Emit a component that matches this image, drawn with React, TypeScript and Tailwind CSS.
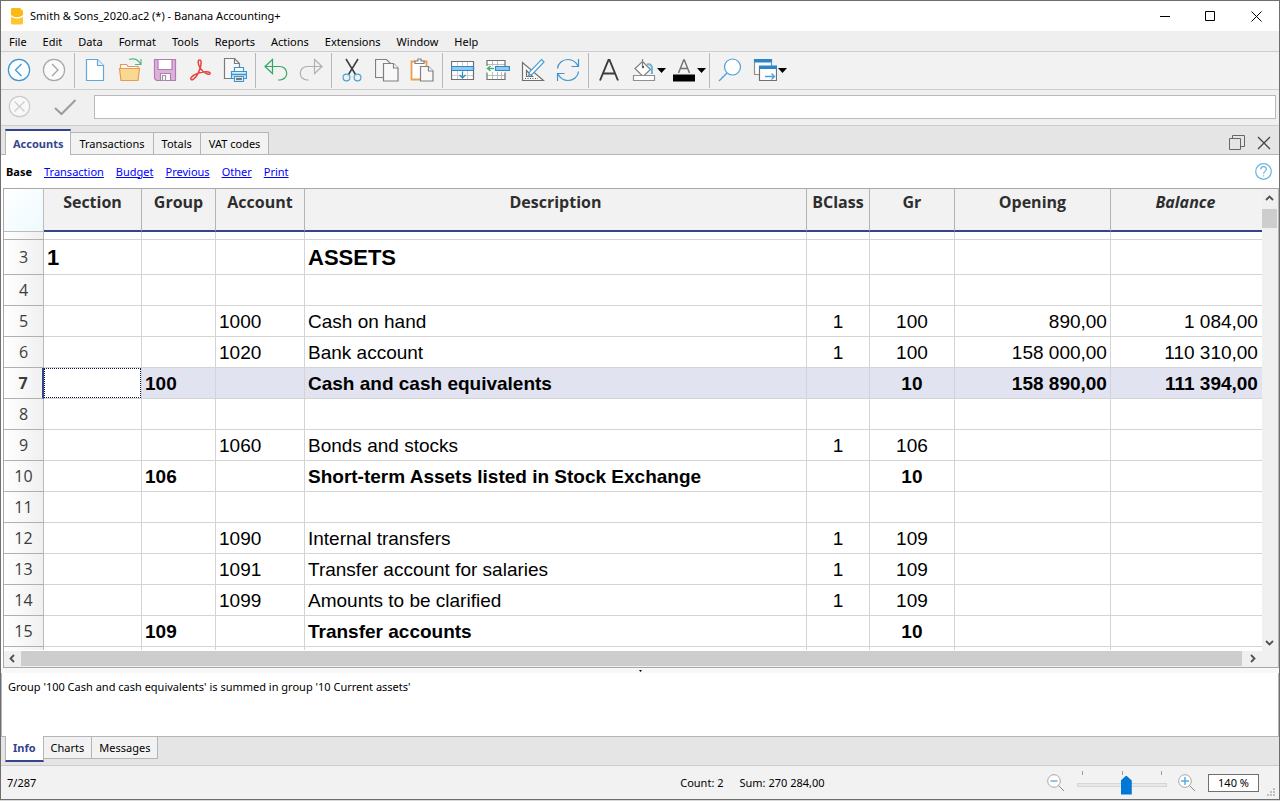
import { useState, type ReactNode } from "react";

const MENUS = ["File", "Edit", "Data", "Format", "Tools", "Reports", "Actions", "Extensions", "Window", "Help"];
const TABS = ["Accounts", "Transactions", "Totals", "VAT codes"];
const VIEWS = ["Transaction", "Budget", "Previous", "Other", "Print"];
const INFO_TABS = ["Info", "Charts", "Messages"];

type Row = {
  n: number;
  section?: string;
  group?: string;
  account?: string;
  description?: string;
  bclass?: string;
  gr?: string;
  opening?: string;
  balance?: string;
  kind?: "title" | "total";
};

const ROWS: Row[] = [
  { n: 3, section: "1", description: "ASSETS", kind: "title" },
  { n: 4 },
  { n: 5, account: "1000", description: "Cash on hand", bclass: "1", gr: "100", opening: "890,00", balance: "1 084,00" },
  { n: 6, account: "1020", description: "Bank account", bclass: "1", gr: "100", opening: "158 000,00", balance: "110 310,00" },
  { n: 7, group: "100", description: "Cash and cash equivalents", gr: "10", opening: "158 890,00", balance: "111 394,00", kind: "total" },
  { n: 8 },
  { n: 9, account: "1060", description: "Bonds and stocks", bclass: "1", gr: "106" },
  { n: 10, group: "106", description: "Short-term Assets listed in Stock Exchange", gr: "10", kind: "total" },
  { n: 11 },
  { n: 12, account: "1090", description: "Internal transfers", bclass: "1", gr: "109" },
  { n: 13, account: "1091", description: "Transfer account for salaries", bclass: "1", gr: "109" },
  { n: 14, account: "1099", description: "Amounts to be clarified", bclass: "1", gr: "109" },
  { n: 15, group: "109", description: "Transfer accounts", gr: "10", kind: "total" },
];

const SELECTED = 7;

function Icon({ children }: { children: ReactNode }) {
  return (
    <svg width="24" height="24" viewBox="0 0 24 24" fill="none" strokeWidth="1.2" aria-hidden="true" className="shrink-0">
      {children}
    </svg>
  );
}

function Caret() {
  return (
    <svg width="9" height="5" viewBox="0 0 9 5" aria-hidden="true" className="shrink-0">
      <path d="M0 0h9L4.5 5z" fill="#000" />
    </svg>
  );
}

function Tool({ label, children }: { label: string; children: ReactNode }) {
  return (
    <button type="button" aria-label={label} className="flex h-9 w-[35px] shrink-0 items-center justify-center">
      <Icon>{children}</Icon>
    </button>
  );
}

function DropTool({ label, children }: { label: string; children: ReactNode }) {
  return (
    <button type="button" aria-label={label} className="flex h-9 w-10 shrink-0 items-center pl-1.5">
      <Icon>{children}</Icon>
      <span className="pl-px">
        <Caret />
      </span>
    </button>
  );
}

function Sep() {
  return (
    <div className="flex h-[35px] w-1.5 shrink-0 justify-center">
      <div className="w-px bg-[#b8b8b8]" />
    </div>
  );
}

function Chevron({ d }: { d: string }) {
  return (
    <svg width="9" height="9" viewBox="0 0 9 9" fill="none" stroke="#505050" strokeWidth="1.8" aria-hidden="true">
      <path d={d} />
    </svg>
  );
}

function Toolbar() {
  return (
    <div role="toolbar" aria-label="Main" className="flex h-[39px] items-center overflow-hidden border-y border-[#cdcdcd] bg-[#f2f2f2] pb-px">
      <Tool label="Back">
        <circle cx="12" cy="12" r="10.6" fill="#fbfdff" stroke="#3c94d0" />
        <path d="M14.5 6L8.5 12l6 6" stroke="#3c94d0" />
      </Tool>
      <Tool label="Forward">
        <circle cx="12" cy="12" r="10.6" fill="#fafafa" stroke="#a8a8a8" />
        <path d="M10 6l6 6-6 6" stroke="#a0a0a0" />
      </Tool>
      <Sep />
      <Tool label="New">
        <path d="M3.5 1.5h11l6 6v15h-17z" fill="#fff" stroke="#62a8da" />
        <path d="M14.5 1.5v6h6" fill="#e2f1fb" stroke="#62a8da" />
      </Tool>
      <Tool label="Open">
        <path d="M2.5 10V6.5h6l1.500 2h10V11" fill="#fff" stroke="#e8935a" />
        <path d="M1.500 10.500h20l-1.500 12H3z" fill="#f8d992" stroke="#ea9a52" />
        <path d="M11 1.500c5-1.500 9 0 11.500 4.500M17 6.500h6V1" stroke="#52b987" />
      </Tool>
      <Tool label="Save">
        <path d="M1.500 1.500h21v21h-19l-2-2z" fill="#dcb2d9" stroke="#b37bb5" />
        <path d="M5 1.500h14v10H5z" fill="#fff" stroke="#b37bb5" />
        <path d="M7.500 22.500v-7h10v7z" fill="#fff" stroke="#b37bb5" />
        <path d="M9.500 17.500h3v5h-3z" fill="#fff" stroke="#999" />
      </Tool>
      <Tool label="Export to PDF">
        <path
          d="M11.500 2c2-.300 2 3.500.700 8-1.500 4.500-4.500 9.800-7 11.400-1.600 1-3.200-.400-2-1.900 2-2.300 7.500-4.600 12.300-5.400 3.500-.600 7-.200 6.600 1.400-.400 1.700-4.400.300-6.900-2C12.600 11.200 10.500 7.500 10.200 4.500c-.1-1.500.400-2.400 1.300-2.500z"
          stroke="#e8403c"
          strokeWidth="1.500"
        />
      </Tool>
      <Tool label="Print">
        <path d="M8 20.500H1.500V.500h10l5 5v4" fill="#f8f8f8" stroke="#7c7c7c" />
        <path d="M11.500.500v5h5" stroke="#7c7c7c" />
        <path d="M11.500 13V9.500h9V13" fill="#fff" stroke="#3c94d0" />
        <path d="M8.500 13.500h15v7h-15z" fill="#d8edfb" stroke="#3c94d0" />
        <path d="M9 16.500h14" stroke="#3c94d0" strokeWidth="1.500" />
        <path d="M11.500 18.500h9v5h-9z" fill="#fff" stroke="#3c94d0" />
        <path d="M13 21h6" stroke="#777" strokeWidth="2.500" />
      </Tool>
      <Sep />
      <Tool label="Undo">
        <path d="M8.500 1.500v14L1 8.500z" stroke="#2faa62" />
        <path d="M1 8.500h15a6.500 6.500 0 0 1 0 13.500h-2" stroke="#2faa62" />
      </Tool>
      <Tool label="Redo">
        <path d="M15.500 1.500v14l7.500-7z" stroke="#b0b0b0" />
        <path d="M23 8.500H8a6.500 6.500 0 0 0 0 13.500h2" stroke="#b0b0b0" />
      </Tool>
      <Sep />
      <Tool label="Cut">
        <path d="M6 1l9.500 15.500M18 1L8.500 16.500" stroke="#3a3a3a" strokeWidth="1.500" />
        <circle cx="6.500" cy="19.500" r="3.400" stroke="#4ba0d8" />
        <circle cx="17.500" cy="19.500" r="3.400" stroke="#4ba0d8" />
      </Tool>
      <Tool label="Copy">
        <path d="M.500 1.500h11l4 4v14H.500z" fill="#f6f6f6" stroke="#808080" />
        <path d="M8.500 5.500h10l4.500 4.500v13H8.500z" fill="#f8f8f8" stroke="#808080" />
        <path d="M18.500 5.500V10H23" fill="#fff" stroke="#808080" />
      </Tool>
      <Tool label="Paste">
        <path d="M1.500 3.500h15v18h-15z" fill="#fff" stroke="#eda04b" strokeWidth="1.800" />
        <path d="M5 5.500V3h3V1h3v2h3v2.500z" fill="#fff" stroke="#808080" />
        <path d="M10.500 8.500h8l4.500 4.500v10H10.500z" fill="#f8f8f8" stroke="#808080" />
        <path d="M18.500 8.500V13H23" fill="#fff" stroke="#808080" />
      </Tool>
      <Sep />
      <Tool label="Insert rows">
        <path d="M.500 3.500h22v18H.500z" fill="#fff" />
        <path d="M6.500 4v17M11.500 4v17M16.500 4v17M1 17.500h22" stroke="#cfcfcf" strokeWidth="1" />
        <path d="M.500 3.500h22v18H.500z" stroke="#707070" />
        <path d="M.500 8.500h22v4H.500z" fill="#90c8f2" stroke="#3088c4" />
        <path d="M11.500 13.500V20M8.500 17l3 3 3-3" stroke="#3088c4" />
      </Tool>
      <Tool label="Add rows">
        <path d="M1 2.500h18v19H1z" fill="#fff" />
        <path d="M6.500 3v5M11.500 3v5M6.500 14v8M11.500 14v8M15.500 14v8M1 17.500h18M1 6.500h18" stroke="#bcbcbc" strokeWidth="1" />
        <path d="M1 8V2.500h18V8M1 14.500v7h18v-7" stroke="#707070" />
        <path d="M9.500 8.500h14v4h-14z" fill="#90c8f2" stroke="#3088c4" />
        <path d="M8 10.500H1.500M4.500 8l-3 2.500 3 2.500" stroke="#45b36b" strokeWidth="1.500" />
      </Tool>
      <Tool label="Check accounting">
        <path d="M1.500 4.500v18h21zM5.500 12.500v6h6z" fill="#f8f8f8" stroke="#707070" />
        <path d="M4 20.500h13" stroke="#555" strokeDasharray="1 1.500" />
        <path d="M20.500 1.500l2.500 2.500-11.500 12-4 1.500 1.500-4z" fill="#fff" stroke="#4a9ed4" />
      </Tool>
      <Tool label="Recalculate">
        <path d="M1.500 10.500C2 5 6.500 1.500 12 1.500c4.500 0 8 2.500 10 6.500M22.500 1v7.500h-7M22.500 13.500C22 19 17.500 22.500 12 22.500c-4.500 0-8-2.500-10-6.500M1.500 23v-7.500h7" stroke="#3c94d0" />
      </Tool>
      <Sep />
      <Tool label="Font">
        <path d="M3 22.500L11.500 2h1L21 22.500M6.500 15.500h11" stroke="#3c3c3c" strokeWidth="1.900" />
      </Tool>
      <DropTool label="Background colour">
        <path d="M10.500 3.500l8 8-7.500 7-8-8z" fill="#fff" stroke="#808080" />
        <path d="M10.500 1v7" stroke="#808080" />
        <circle cx="11" cy="9" r="1.200" fill="#555" />
        <path d="M15 6.500c4-1 5 1.500 5 4.500v5" stroke="#6eb5e4" strokeWidth="2" />
        <path d="M1.500 17.500h21v5h-21z" fill="#fff" stroke="#909090" />
      </DropTool>
      <DropTool label="Text colour">
        <path d="M6.500 15L11.700 2h.6l5.200 13M8.500 10.500h7" stroke="#707070" strokeWidth="1.400" />
        <path d="M1 16.500h22v7H1z" fill="#000" />
      </DropTool>
      <Sep />
      <Tool label="Find">
        <circle cx="14.500" cy="9" r="8" fill="#fff" stroke="#4ba0d8" />
        <path d="M9 15l-8 8" stroke="#4ba0d8" />
      </Tool>
      <DropTool label="Windows">
        <path d="M1.500 1.500h17v15h-17z" fill="#fff" stroke="#909090" />
        <path d="M1 1h18v3.500H1z" fill="#2787c8" />
        <path d="M6.500 8.500h17v14h-17z" fill="#fff" stroke="#707070" />
        <path d="M6 7.500h18V11H6z" fill="#2787c8" />
        <path d="M12 18.500h9.500M18.500 15.500l3 3-3 3" stroke="#4ba0d8" strokeWidth="1.400" />
      </DropTool>
    </div>
  );
}

function TitleBar() {
  return (
    <header className="flex h-[30px] shrink-0 items-center bg-white pl-[9px]">
      <svg width="14" height="17" viewBox="0 0 14 17" aria-hidden="true">
        <path d="M1.500 0H10l3 3v4c-3.500 3-8.500 3-12 0V.500z" fill="#fbb917" />
        <path d="M1 8.500c4 2.800 8.500 2.800 12 0V15.500L12 16.500H2L1 15.500z" fill="#fcc630" />
      </svg>
      <h1 className="grow truncate pl-1.5">Smith &amp; Sons_2020.ac2 (*) - Banana Accounting+</h1>
      <div className="flex">
        <button type="button" aria-label="Minimize" className="flex h-7 w-[46px] items-center justify-center">
          <svg width="11" height="11" viewBox="0 0 11 11" stroke="#000" fill="none"><path d="M0 5.500h10" /></svg>
        </button>
        <button type="button" aria-label="Maximize" className="flex h-7 w-[45px] items-center justify-center">
          <svg width="11" height="11" viewBox="0 0 11 11" stroke="#000" fill="none"><path d="M.500.500h9v9h-9z" /></svg>
        </button>
        <button type="button" aria-label="Close" className="flex h-7 w-[46px] items-center justify-center">
          <svg width="11" height="11" viewBox="0 0 11 11" stroke="#000" fill="none"><path d="M.500.500l10 10M10.500.500l-10 10" /></svg>
        </button>
      </div>
    </header>
  );
}

function AccountsTable() {
  const head = "border-r border-b-2 border-r-[#b4b4b4] border-b-[#34448f] bg-[#f2f2f2] p-0 pt-px align-top font-bold";
  const cell = "overflow-hidden border-r border-b border-[#d4d4d4] px-[3px] pt-0.5 pb-0 whitespace-nowrap";
  const last = "overflow-hidden border-b border-[#d4d4d4] pt-0.5 pr-1 pb-0 pl-[3px] text-right whitespace-nowrap";
  const numCell = "border-b border-b-[#b0b0b0] bg-linear-to-r from-white to-[#f0f0f0] p-0 text-center";
  const numEdge = "border-r border-r-[#bcbcbc]";
  return (
    <table className="w-full table-fixed border-separate border-spacing-0">
      <colgroup>
        <col className="w-10" />
        <col className="w-[98px]" />
        <col className="w-[74px]" />
        <col className="w-[89px]" />
        <col />
        <col className="w-[63px]" />
        <col className="w-[85px]" />
        <col className="w-[156px]" />
        <col className="w-[151px]" />
      </colgroup>
      <thead>
        <tr className="h-[43px] text-base leading-6 text-[#2e2e2e]">
          <td className="border-r border-b border-[#bcbcbc] bg-linear-to-br from-white to-[#eefaff] p-0" />
          <th className={head}>Section</th>
          <th className={head}>Group</th>
          <th className={head}>Account</th>
          <th className={head}>Description</th>
          <th className={head}>BClass</th>
          <th className={head}>Gr</th>
          <th className={head}>Opening</th>
          <th className="border-b-2 border-b-[#34448f] bg-[#f2f2f2] p-0 pt-px pr-0.5 align-top font-bold italic">Balance</th>
        </tr>
      </thead>
      <tbody className="font-['Liberation_Sans',Arial,sans-serif] text-[19px] leading-6">
        <tr className="h-2">
          <td className={`${numCell} ${numEdge}`} />
          {[0, 1, 2, 3, 4, 5, 6].map((i) => (
            <td key={i} className={cell} />
          ))}
          <td className={last} />
        </tr>
        {ROWS.map((r) => {
          const selected = r.n === SELECTED;
          return (
            <tr
              key={r.n}
              aria-selected={selected}
              className={`${r.kind === "title" ? "h-[35px] text-[22px]" : "h-[31px]"} ${r.kind ? "font-bold" : ""} ${selected ? "bg-[#e2e3f1]" : ""}`}
            >
              <th
                scope="row"
                className={`${numCell} font-['Open_Sans','Noto_Sans',sans-serif] text-base text-[#3c3c3c] ${selected ? "border-r-2 border-r-[#34448f] font-bold" : `${numEdge} font-normal`}`}
              >
                {r.n}
              </th>
              {selected ? (
                <td className="border-r border-b border-[#d4d4d4] bg-white p-0">
                  <div className="h-[30px] border border-dotted border-[#101840]">{r.section}</div>
                </td>
              ) : (
                <td className={cell}>{r.section}</td>
              )}
              <td className={cell}>{r.group}</td>
              <td className={cell}>{r.account}</td>
              <td className={cell}>{r.description}</td>
              <td className={`${cell} text-center`}>{r.bclass}</td>
              <td className={`${cell} text-center`}>{r.gr}</td>
              <td className={`${cell} text-right`}>{r.opening}</td>
              <td className={last}>{r.balance}</td>
            </tr>
          );
        })}
        <tr className="h-[31px]">
          <td className={`${numCell} ${numEdge}`} />
          {[0, 1, 2, 3, 4, 5, 6].map((i) => (
            <td key={i} className={cell} />
          ))}
          <td className={last} />
        </tr>
      </tbody>
    </table>
  );
}

export default function App() {
  const [entry, setEntry] = useState("");
  const [zoom, setZoom] = useState(140);
  return (
    <div className="flex h-screen flex-col bg-[#d9d9d9] pb-px text-[11px] leading-4 text-black">
      <div className="flex min-h-0 grow flex-col border border-[#6e6e6e] bg-[#f0f0f0] font-['Noto_Sans','Open_Sans',sans-serif]">
        <TitleBar />
        <nav aria-label="Menu" className="flex h-5 shrink-0 items-center bg-[#efefef]">
          {MENUS.map((m) => (
            <button key={m} type="button" className="px-2 pt-0.5">
              {m}
            </button>
          ))}
        </nav>
        <div className="shrink-0">
          <Toolbar />
        </div>

        <div className="flex h-9 shrink-0 items-center gap-[18px] border-b border-[#cdcdcd] pr-[3px] pb-0.5 pl-1.5">
          <button type="button" aria-label="Cancel entry">
            <svg width="24" height="24" viewBox="0 0 24 24" fill="none" stroke="#cccccc" strokeWidth="1.2">
              <circle cx="12.500" cy="11.500" r="10.200" fill="#f8f8f8" />
              <path d="M7.500 6.500l10 10M17.500 6.500l-10 10" />
            </svg>
          </button>
          <div className="flex grow items-center gap-[17px]">
            <button type="button" aria-label="Confirm entry">
              <svg width="28" height="24" viewBox="0 0 28 24" fill="none" stroke="#9c9c9c" strokeWidth="2">
                <path d="M6 13l6.500 6L26.500 5" />
              </svg>
            </button>
            <input
              type="text"
              aria-label="Cell content"
              value={entry}
              onChange={(e) => setEntry(e.target.value)}
              className="h-6 grow border border-[#bababa] bg-white px-1 text-xs outline-none"
            />
          </div>
        </div>

        <div className="flex h-[29px] shrink-0 items-end border-b border-[#b5b5b5] bg-[#e5e5e5] pl-1">
          <div role="tablist" aria-label="Tables" className="-mb-px flex items-end">
            {TABS.map((t, i) => (
              <button
                key={t}
                type="button"
                role="tab"
                aria-selected={i === 0}
                className={
                  i === 0
                    ? "h-[26px] border-t-2 border-r border-l border-t-[#34448f] border-r-[#b5b5b5] border-l-[#b5b5b5] bg-white px-[7px] pt-px font-bold text-[#34448f]"
                    : "h-[23px] border border-l-0 border-[#b5b5b5] bg-[#f2f2f2] px-2"
                }
              >
                {t}
              </button>
            ))}
          </div>
          <div className="flex grow items-center justify-end gap-3 pr-2 pb-[3px]">
            <button type="button" aria-label="Restore view">
              <svg width="16" height="16" viewBox="0 0 16 16" fill="#e5e5e5" stroke="#666">
                <path d="M3.500.500h12v11h-12z" />
                <path d="M.500 3.500h11v11H.500z" />
              </svg>
            </button>
            <button type="button" aria-label="Close view">
              <svg width="14" height="14" viewBox="0 0 14 14" fill="none" stroke="#444" strokeWidth="1.300">
                <path d="M1 1l12 12M13 1L1 13" />
              </svg>
            </button>
          </div>
        </div>

        <nav aria-label="Views" className="flex h-[33px] shrink-0 items-center gap-3 bg-white pr-[7px] pl-[5px]">
          <span className="font-bold">Base</span>
          {VIEWS.map((v) => (
            <a key={v} href="#" className="text-[#0000ff] underline">
              {v}
            </a>
          ))}
          <a href="#" aria-label="Help on views" className="ml-auto">
            <svg width="17" height="17" viewBox="0 0 17 17" fill="none" stroke="#6db4e2" strokeWidth="1.200">
              <circle cx="8.500" cy="8.500" r="7.800" />
              <path d="M5.800 6.500c0-1.800 1.200-2.800 2.800-2.800s2.700 1 2.700 2.500c0 2.200-2.700 2.200-2.700 4.500M8.600 12.200v1.400" />
            </svg>
          </a>
        </nav>

        <div className="flex min-h-0 grow flex-col bg-white pl-0.5 font-['Open_Sans','Noto_Sans',sans-serif]">
          <div className="flex min-h-0 grow flex-col border-t border-b border-l border-[#a8a8a8] bg-[#f0f0f0]">
            <div className="flex min-h-0 grow">
              <main className="min-w-0 grow overflow-hidden border-b border-white bg-white">
                <AccountsTable />
              </main>
              <div className="flex w-4 shrink-0 flex-col items-center justify-between bg-[#f0f0f0] pt-[5px] pr-px pb-1">
                <div className="flex w-full flex-col items-center gap-1.5">
                  <Chevron d="M1 6l3.500-3.500L8 6" />
                  <div className="h-[19px] w-full bg-[#cdcdcd]" />
                </div>
                <Chevron d="M1 3l3.500 3.500L8 3" />
              </div>
              <div className="w-px shrink-0 bg-[#b5b5b5]" />
            </div>
            <div className="flex h-4 shrink-0 items-start">
              <div className="flex h-[15px] w-[17px] items-center justify-center">
                <Chevron d="M6 1L2.500 4.500 6 8" />
              </div>
              <div className="h-[15px] grow bg-[#cdcdcd]" />
              <div className="flex h-[15px] w-9 items-center pl-1.5">
                <Chevron d="M3 1l3.500 3.500L3 8" />
              </div>
              <div className="h-4 w-px shrink-0 bg-[#b5b5b5]" />
            </div>
          </div>
        </div>

        <div className="flex h-[5px] shrink-0 items-start justify-center bg-[#f8f8f8]">
          <svg width="3" height="5" viewBox="0 0 3 5"><path d="M0 2h3L1.500 4z" fill="#000" /></svg>
        </div>
        <section aria-label="Info" className="h-16 shrink-0 border-x border-b border-[#b5b5b5] bg-white px-1.5 pt-1.5">
          <p>Group '100 Cash and cash equivalents' is summed in group '10 Current assets'</p>
        </section>
        <div role="tablist" aria-label="Messages" className="flex h-[29px] shrink-0 items-start border-b border-[#cdcdcd] bg-[#e5e5e5] pl-1">
          {INFO_TABS.map((t, i) => (
            <button
              key={t}
              type="button"
              role="tab"
              aria-selected={i === 0}
              className={
                i === 0
                  ? "-mt-px h-[26px] border-r border-b-2 border-l border-r-[#b5b5b5] border-b-[#34448f] border-l-[#b5b5b5] bg-white px-[7px] font-bold text-[#34448f]"
                  : "h-[22px] border-r border-b border-[#b5b5b5] bg-[#f2f2f2] px-[7px]"
              }
            >
              {t}
            </button>
          ))}
        </div>

        <footer className="flex h-[33px] shrink-0 items-center bg-[#f2f2f2] pl-1.5">
          <span className="flex-1">7/287</span>
          <span>Count: 2</span>
          <span className="pl-4">Sum: 270 284,00</span>
          <div className="flex flex-[0.675] items-center justify-end">
            <button type="button" aria-label="Zoom out">
              <svg width="18" height="18" viewBox="0 0 18 18" fill="none">
                <circle cx="7" cy="7" r="6.300" fill="#fff" stroke="#a8a8a8" />
                <path d="M3.500 7h7" stroke="#7fc0ea" strokeWidth="1.800" />
                <path d="M11.500 11.500l5.500 5.500" stroke="#888" />
              </svg>
            </button>
            <div className="ml-3 flex h-7 w-[90px] flex-col pt-0.5">
              <div className="flex h-1 shrink-0 justify-between px-[5px]" aria-hidden="true">
                <span className="w-px bg-[#a0a090]" />
                <span className="w-px bg-[#a0a090]" />
                <span className="w-px bg-[#a0a090]" />
              </div>
              <input
                type="range"
                aria-label="Zoom"
                min={20}
                max={236}
                value={zoom}
                onChange={(e) => setZoom(Number(e.target.value))}
                className="h-5 w-full appearance-none bg-transparent [&::-webkit-slider-runnable-track]:h-1 [&::-webkit-slider-runnable-track]:border [&::-webkit-slider-runnable-track]:border-[#d6d6d6] [&::-webkit-slider-runnable-track]:bg-[#e7eaea] [&::-webkit-slider-thumb]:-mt-2 [&::-webkit-slider-thumb]:h-[19px] [&::-webkit-slider-thumb]:w-[11px] [&::-webkit-slider-thumb]:appearance-none [&::-webkit-slider-thumb]:bg-[#0078d7] [&::-webkit-slider-thumb]:[clip-path:polygon(50%_0,100%_5px,100%_100%,0_100%,0_5px)]"
              />
            </div>
            <button type="button" aria-label="Zoom in" className="ml-[11px]">
              <svg width="18" height="18" viewBox="0 0 18 18" fill="none">
                <circle cx="7" cy="7" r="6.300" fill="#fff" stroke="#a8a8a8" />
                <path d="M3 7h8M7 3v8" stroke="#5badde" strokeWidth="1.500" />
                <path d="M11.500 11.500l5.500 5.500" stroke="#888" />
              </svg>
            </button>
            <button type="button" aria-label="Zoom level" className="ml-3 h-[18px] w-[51px] border border-[#707070] bg-white text-center leading-4">
              {zoom} %
            </button>
            <svg width="9" height="9" viewBox="0 0 9 9" fill="#bfbfbf" aria-hidden="true" className="mr-[3px] ml-2 self-end">
              <path d="M6 0h2v2H6zM3 3h2v2H3zM6 3h2v2H6zM0 6h2v2H0zM3 6h2v2H3zM6 6h2v2H6z" />
            </svg>
          </div>
        </footer>
      </div>
    </div>
  );
}
